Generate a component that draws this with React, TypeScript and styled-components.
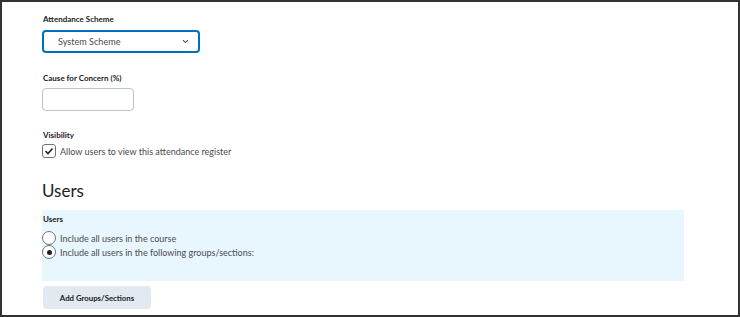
import type { FC } from 'react';
import styled, { createGlobalStyle } from 'styled-components';

const GlobalStyle = createGlobalStyle`
  html, body {
    margin: 0;
    padding: 0;
    background: #ffffff;
  }
  * {
    box-sizing: border-box;
  }
`;

const StyledFrame = styled.div`
  width: 740px;
  height: 317px;
  border: 2px solid #333333;
  padding: 11px 0 0 40px;
  overflow: hidden;
  font-family: Lato, 'Liberation Sans', sans-serif;
  color: #494c4e;
  display: flex;
  flex-direction: column;
`;

const StyledLabel = styled.div<{ $gap: number }>`
  font-size: 8px;
  line-height: 12px;
  font-weight: 700;
  color: #202122;
  margin-left: 1px;
  margin-bottom: ${({ $gap }) => $gap}px;
`;

const StyledSelect = styled.div`
  width: 158px;
  height: 23px;
  border: 2px solid #006fbf;
  border-radius: 4px;
  display: flex;
  align-items: center;
  justify-content: space-between;
  padding: 0 9px 0 14px;
  font-size: 9.1px;
  color: #494c4e;
  margin-bottom: 19px;
`;

const StyledInput = styled.div`
  width: 92px;
  height: 23px;
  border: 1px solid #bcc3c9;
  border-radius: 4px;
  margin-bottom: 18px;
`;

const StyledOptionRow = styled.label`
  display: flex;
  align-items: center;
  gap: 4px;
  height: 14px;
  font-size: 9px;
  color: #494c4e;
`;

const StyledCheckbox = styled.span`
  width: 14px;
  height: 14px;
  border: 1px solid #6e7477;
  border-radius: 3px;
  display: flex;
  align-items: center;
  justify-content: center;
  flex-shrink: 0;
`;

const StyledRadio = styled.span<{ $checked?: boolean }>`
  width: 14px;
  height: 14px;
  border: 1px solid #6e7477;
  border-radius: 50%;
  display: flex;
  align-items: center;
  justify-content: center;
  background: #ffffff;
  flex-shrink: 0;

  &::after {
    content: '';
    width: 5px;
    height: 5px;
    border-radius: 50%;
    background: ${({ $checked }) => ($checked ? '#202122' : 'transparent')};
  }
`;

const StyledHeading = styled.h2`
  margin: 22px 0 8px;
  font-size: 17px;
  line-height: 22px;
  font-weight: 400;
  color: #202122;
`;

const StyledPanel = styled.div`
  width: 642px;
  height: 71px;
  background: #e8f6fe;
  padding: 3px 0 0 0;
  margin-bottom: 5px;
`;

const StyledOptionList = styled.div`
  display: flex;
  flex-direction: column;
`;

const StyledButton = styled.button`
  width: 108px;
  height: 23px;
  border: none;
  border-radius: 4px;
  background: #e3e9f1;
  font-family: Lato, 'Liberation Sans', sans-serif;
  font-size: 7.8px;
  font-weight: 700;
  color: #202122;
  padding: 0;
  margin-left: 1px;
`;

const App: FC = () => {
  return (
    <>
      <GlobalStyle />
      <StyledFrame>
        <StyledLabel $gap={5}>Attendance Scheme</StyledLabel>
        <StyledSelect>
          <span>System Scheme</span>
          <svg width="7" height="5" viewBox="0 0 7 5">
            <polyline points="1,1.2 3.5,3.6 6,1.2" fill="none" stroke="#494c4e" strokeWidth="1.1" />
          </svg>
        </StyledSelect>

        <StyledLabel $gap={4}>Cause for Concern (%)</StyledLabel>
        <StyledInput />

        <StyledLabel $gap={3}>Visibility</StyledLabel>
        <StyledOptionRow>
          <StyledCheckbox>
            <svg width="10" height="8" viewBox="0 0 10 8">
              <polyline points="1.5,4 4,6.5 8.5,1.5" fill="none" stroke="#202122" strokeWidth="1.6" />
            </svg>
          </StyledCheckbox>
          Allow users to view this attendance register
        </StyledOptionRow>

        <StyledHeading>Users</StyledHeading>

        <StyledPanel>
          <StyledLabel $gap={6}>Users</StyledLabel>
          <StyledOptionList>
            <StyledOptionRow>
              <StyledRadio />
              Include all users in the course
            </StyledOptionRow>
            <StyledOptionRow>
              <StyledRadio $checked />
              Include all users in the following groups/sections:
            </StyledOptionRow>
          </StyledOptionList>
        </StyledPanel>

        <StyledButton>Add Groups/Sections</StyledButton>
      </StyledFrame>
    </>
  );
};

export default App;
